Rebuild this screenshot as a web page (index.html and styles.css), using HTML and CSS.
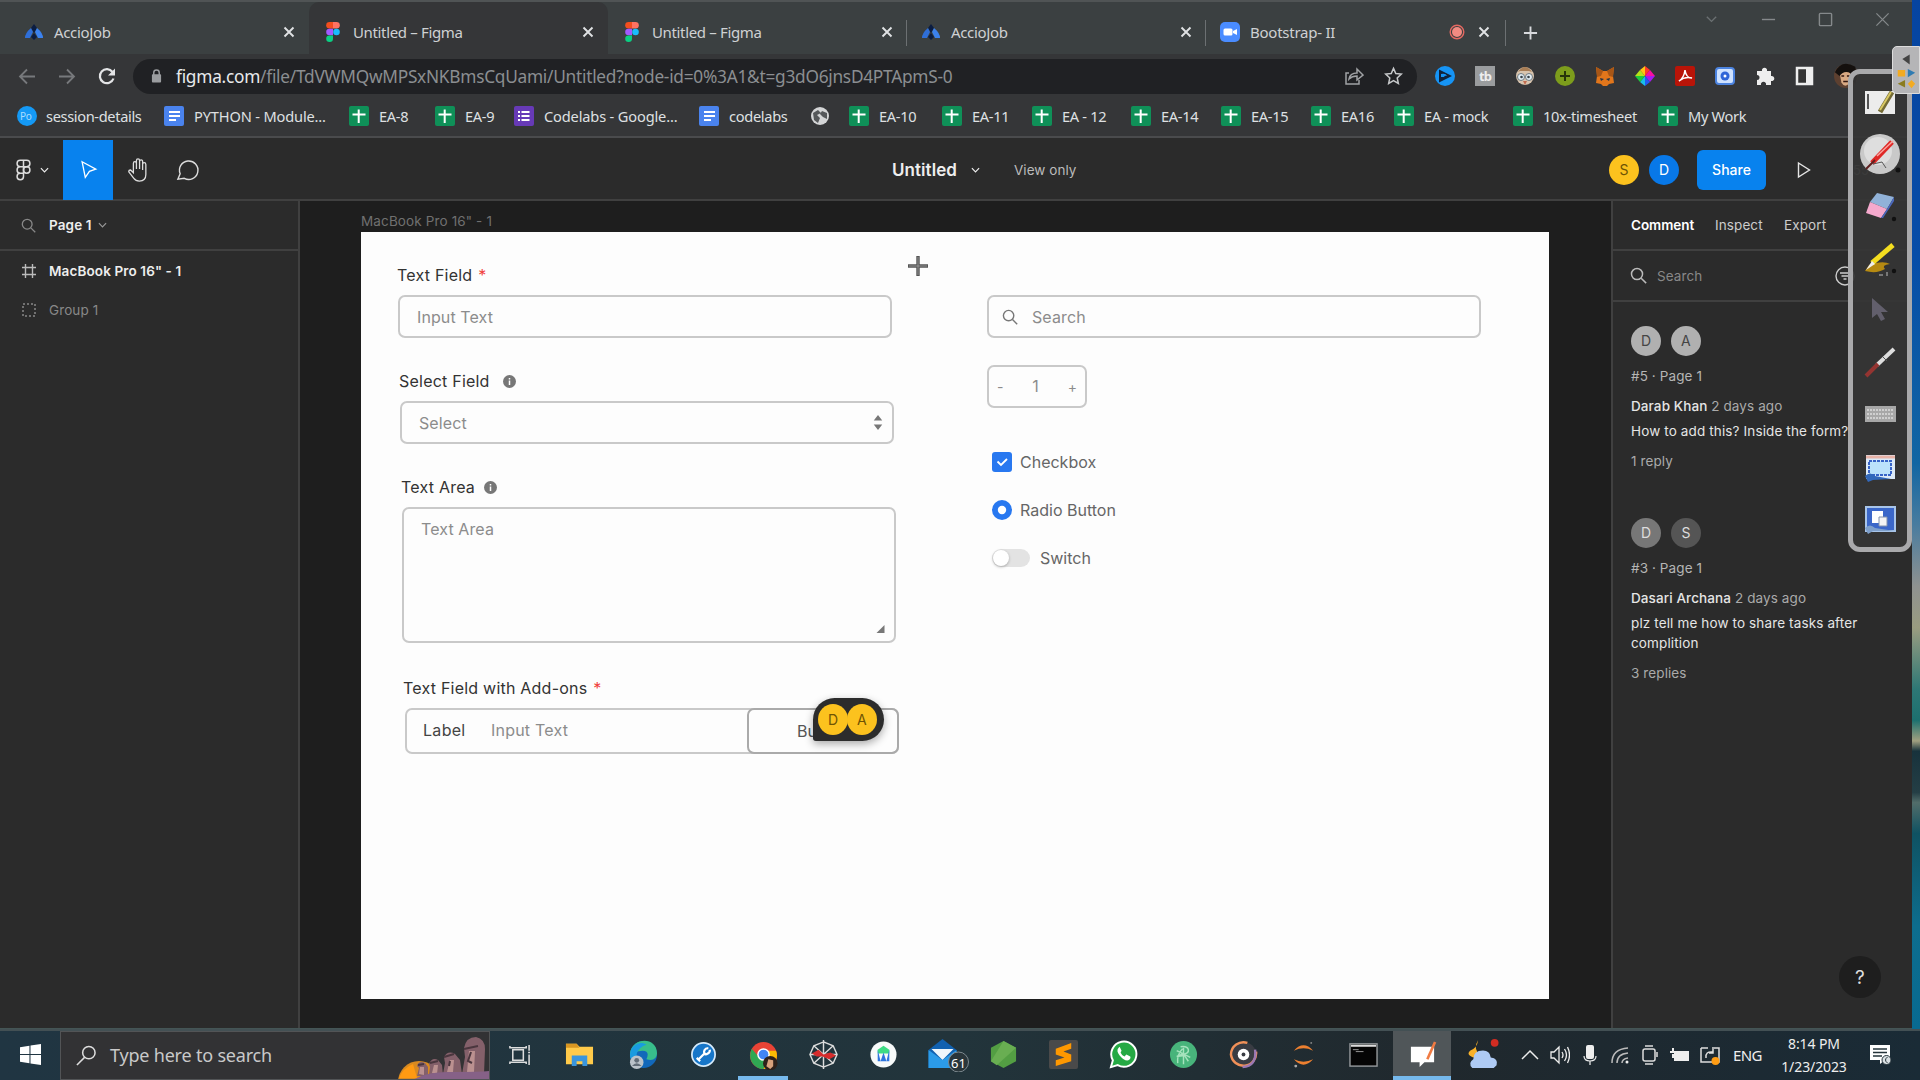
FILE: index.html
```html
<!DOCTYPE html>
<html lang="en">
<head>
<meta charset="utf-8">
<title>Untitled – Figma</title>
<link rel="stylesheet" href="styles.css">
</head>
<body>
<svg class="defs" aria-hidden="true">
  <symbol id="accio" viewBox="0 0 20 20"><path d="M7 6l3-4 3 4-3 5z" fill="#0b1d42"/><path d="M7 6l2 4-3 6H1q0-5 6-10z" fill="#2f6fd8"/><path d="M13 6l-2 4 3 6h5q0-5-6-10z" fill="#3b82ee"/><path d="M10 11l3 4-3 3-3-3z" fill="#0b1d42"/></symbol>
  <symbol id="figma" viewBox="0 0 14 20"><path d="M3.500 0H7v6.600H3.500a3.300 3.300 0 010-6.600z" fill="#f24e1e"/><path d="M7 0h3.500a3.300 3.300 0 010 6.600H7z" fill="#ff7262"/><path d="M3.500 6.700H7v6.600H3.500a3.300 3.300 0 010-6.600z" fill="#a259ff"/><circle cx="10.500" cy="10" r="3.300" fill="#1abcfe"/><path d="M3.500 13.400H7v3.300a3.400 3.300 0 11-3.500-3.300z" fill="#0acf83"/></symbol>
  <symbol id="sheet" viewBox="0 0 20 20"><rect width="20" height="20" rx="2" fill="#0f9058"/><path d="M9.700 3.500v13.500M3.500 8.500h13" stroke="#fff" stroke-width="2"/></symbol>
  <symbol id="doc" viewBox="0 0 20 20"><rect width="20" height="20" rx="2" fill="#4a83ee"/><path d="M5 6h11M5 10h11M5 14h7" stroke="#fff" stroke-width="2"/></symbol>
  <symbol id="x" viewBox="0 0 12 12"><path d="M1.500 1.500l9 9M10.500 1.500l-9 9" stroke="currentColor" stroke-width="1.900"/></symbol>
  <symbol id="chev" viewBox="0 0 10 8"><path d="M1 2l4 4 4-4" fill="none" stroke="currentColor" stroke-width="1.300"/></symbol>
  <symbol id="lens" viewBox="0 0 16 16"><circle cx="6.600" cy="6.600" r="5.200" fill="none" stroke="currentColor" stroke-width="1.400"/><path d="M10.500 10.500l4.700 4.700" stroke="currentColor" stroke-width="1.400"/></symbol>
  <symbol id="info" viewBox="0 0 13 13"><circle cx="6.500" cy="6.500" r="6.500" fill="#777"/><path d="M6.500 5.500v4.500M6.500 3v1.500" stroke="#fff" stroke-width="1.500"/></symbol>
</svg>

<div class="screen">
  <header class="tabs">
    <div class="tab"><svg class="ico"><use href="#accio"/></svg><span>AccioJob</span><svg class="close"><use href="#x"/></svg></div>
    <div class="tab current"><svg class="ico"><use href="#figma"/></svg><span>Untitled – Figma</span><svg class="close"><use href="#x"/></svg></div>
    <div class="tab line"><svg class="ico"><use href="#figma"/></svg><span>Untitled – Figma</span><svg class="close"><use href="#x"/></svg></div>
    <div class="tab line"><svg class="ico"><use href="#accio"/></svg><span>AccioJob</span><svg class="close"><use href="#x"/></svg></div>
    <div class="tab line"><svg class="ico" viewBox="0 0 20 20"><rect width="20" height="20" rx="5" fill="#4a8cff"/><rect x="3.500" y="6.500" width="9" height="7" rx="1.500" fill="#fff"/><path d="M13 9l4-2v6l-4-2z" fill="#fff"/></svg><span>Bootstrap- II</span><svg class="rec" viewBox="0 0 16 16"><circle cx="8" cy="8" r="6.800" fill="none" stroke="#e46962" stroke-width="1.400"/><circle cx="8" cy="8" r="5" fill="#f28b82"/></svg><svg class="close"><use href="#x"/></svg></div>
    <svg class="newtab" viewBox="0 0 16 16"><path d="M8 1v14M1 8h14" stroke="#d8dadd" stroke-width="2"/></svg>
    <div class="winctl">
      <svg viewBox="0 0 16 16"><path d="M3 5l5 5 5-5" fill="none" stroke="#6b7072" stroke-width="1.500"/></svg>
      <svg viewBox="0 0 16 16"><path d="M1 8h14" stroke="#85898b" stroke-width="1.500"/></svg>
      <svg viewBox="0 0 16 16"><rect x="1.500" y="1.500" width="13" height="13" rx="1" fill="none" stroke="#85898b" stroke-width="1.500"/></svg>
      <svg viewBox="0 0 16 16"><path d="M1.500 1.500l13 13M14.500 1.500l-13 13" stroke="#85898b" stroke-width="1.300"/></svg>
    </div>
  </header>

  <div class="address">
    <svg class="nav" viewBox="0 0 18 18"><path d="M17 9H2M9 2L2 9l7 7" fill="none" stroke="#77797c" stroke-width="1.800"/></svg>
    <svg class="nav" viewBox="0 0 18 18"><path d="M1 9h15M9 2l7 7-7 7" fill="none" stroke="#77797c" stroke-width="1.800"/></svg>
    <svg class="nav" viewBox="0 0 18 18"><path d="M14.500 4.500A7 7 0 1015.500 11" fill="none" stroke="#e3e4e6" stroke-width="2.200"/><path d="M17 1v7h-7z" fill="#e3e4e6"/></svg>
    <div class="url">
      <svg class="lock" viewBox="0 0 12 16"><rect x="1" y="6" width="10" height="9" rx="1" fill="#9b9da0"/><path d="M3 7V4.500a3 3 0 016 0V7" fill="none" stroke="#9b9da0" stroke-width="1.600"/></svg>
      <span class="path"><b>figma.com</b>/file/TdVWMQwMPSxNKBmsCqUami/Untitled?node-id=0%3A1&amp;t=g3dO6jnsD4PTApmS-0</span>
      <svg class="share-ico" viewBox="0 0 20 20"><path d="M5 7H2v11h13v-4" fill="none" stroke="#a0a2a5" stroke-width="1.500"/><path d="M5 13q1-6 8-6V3l6 6-6 5v-4q-5 0-8 3z" fill="none" stroke="#a0a2a5" stroke-width="1.500"/></svg>
      <svg class="star" viewBox="0 0 20 20"><path d="M10 2l2.400 5.400 5.800.6-4.300 4 1.200 5.800-5.100-3-5.100 3 1.200-5.800-4.300-4 5.800-.6z" fill="none" stroke="#c5c7c9" stroke-width="1.600"/></svg>
    </div>
    <div class="exts">
      <svg viewBox="0 0 20 20"><circle cx="10" cy="10" r="10" fill="#1694f5"/><path d="M4 3.500l13 6.500-13 6.500z" fill="#10233c"/><path d="M6 11V8q5-1 6 2-2-1-3 1z" fill="#1694f5"/></svg>
      <svg viewBox="0 0 20 20"><rect width="20" height="20" fill="#9a9c9e"/><text x="4" y="15" class="tb">tb</text></svg>
      <svg viewBox="0 0 20 20"><circle cx="10" cy="10" r="9" fill="#d8c4ae"/><path d="M3 6q7-10 14 0l-3-1H5z" fill="#a87d55"/><circle cx="6" cy="11" r="3.500" fill="#e4eef4" stroke="#6f7980"/><circle cx="14" cy="11" r="3.500" fill="#e4eef4" stroke="#6f7980"/><circle cx="6.500" cy="11" r="1.300" fill="#374148"/><circle cx="13.500" cy="11" r="1.300" fill="#374148"/><path d="M8 15h4l-2 4z" fill="#c06b4f"/></svg>
      <svg viewBox="0 0 20 20"><circle cx="10" cy="10" r="10" fill="#7d9d1c"/><path d="M10 5v10M5 10h10" stroke="#27340b" stroke-width="2"/></svg>
      <svg viewBox="0 0 20 20"><path d="M1 1l7 4h4l7-4-1 9 1 7-5 1-2 2H8l-2-2-5-1 1-7z" fill="#e2761b"/><path d="M5 12l4 1-3 2zM15 12l-4 1 3 2z" fill="#233447"/><path d="M1 1l7 4-2 5-4 1zM19 1l-7 4 2 5 4 1z" fill="#a85616"/></svg>
      <svg viewBox="0 0 20 20"><path d="M10 10V0l5 4z" fill="#ff3a28"/><path d="M10 10l5-6 5 6z" fill="#f70ea1"/><path d="M10 10h10l-5 6z" fill="#a31af0"/><path d="M10 10l5 6-5 4z" fill="#2459f2"/><path d="M10 10v10l-5-4z" fill="#18bfe9"/><path d="M10 10l-5 6-5-6z" fill="#1fca3d"/><path d="M10 10H0l5-6z" fill="#b5e01a"/><path d="M10 10L5 4l5-4z" fill="#ffc414"/></svg>
      <svg viewBox="0 0 20 20"><rect width="20" height="20" rx="2" fill="#b91408"/><path d="M4 15q5-3 6-11 1 8 7 8-7-2-13 3z" fill="none" stroke="#fff" stroke-width="1.500"/></svg>
      <svg viewBox="0 0 20 20"><rect x="1" y="2" width="18" height="16" rx="3" fill="#cfe2ff" stroke="#4c83df" stroke-width="2"/><circle cx="10" cy="10" r="4.500" fill="#2f65d8"/><circle cx="10" cy="10" r="1.500" fill="#fff"/></svg>
      <svg viewBox="0 0 20 20"><path d="M2 5h5a2.600 2.600 0 115 0h4v5a2.600 2.600 0 110 5v4h-5a2.600 2.600 0 10-5 0H2v-5a2.500 2.500 0 100-5z" fill="#eee"/></svg>
      <svg viewBox="0 0 20 20"><rect x="2" y="2" width="15" height="16" fill="#333" stroke="#eee" stroke-width="2.500"/><path d="M11 2h6v16h-6z" fill="#eee"/></svg>
      <svg class="face" viewBox="0 0 26 28"><circle cx="13" cy="14" r="13" fill="#5d4030"/><path d="M6 10q8-5 12 2l-1 9q-5 7-9 0z" fill="#d8a983"/><path d="M1 10Q8-5 23 4l2 10-2 10-5-13q-7-4-12 3z" fill="#14100e"/><path d="M8 14h3M14 14h3M10 20h5" stroke="#30160f" stroke-width="1.500"/></svg>
    </div>
  </div>

  <nav class="bookmarks">
    <div class="bm"><svg viewBox="0 0 20 20"><circle cx="10" cy="10" r="10" fill="#1499f5"/><text x="3" y="14" class="po">Po</text></svg><span>session-details</span></div>
    <div class="bm wide"><svg><use href="#doc"/></svg><span>PYTHON - Module...</span></div>
    <div class="bm"><svg><use href="#sheet"/></svg><span>EA-8</span></div>
    <div class="bm"><svg><use href="#sheet"/></svg><span>EA-9</span></div>
    <div class="bm wide"><svg viewBox="0 0 20 20"><rect width="20" height="20" rx="2" fill="#673ab7"/><path d="M7.500 6h8M7.500 10h8M7.500 14h8M4 6h2M4 10h2M4 14h2" stroke="#fff" stroke-width="2"/></svg><span>Codelabs - Google...</span></div>
    <div class="bm"><svg><use href="#doc"/></svg><span>codelabs</span></div>
    <div class="bm"><svg viewBox="0 0 20 20"><circle cx="10" cy="10" r="9" fill="#d4d5d6"/><path d="M3 7l5-3 3 3-4 2 3 3-2 5-4-3zM12 5l5 2v6l-4-2-3-3z" fill="#55585a"/></svg></div>
    <div class="bm"><svg><use href="#sheet"/></svg><span>EA-10</span></div>
    <div class="bm"><svg><use href="#sheet"/></svg><span>EA-11</span></div>
    <div class="bm"><svg><use href="#sheet"/></svg><span>EA - 12</span></div>
    <div class="bm"><svg><use href="#sheet"/></svg><span>EA-14</span></div>
    <div class="bm"><svg><use href="#sheet"/></svg><span>EA-15</span></div>
    <div class="bm"><svg><use href="#sheet"/></svg><span>EA16</span></div>
    <div class="bm"><svg><use href="#sheet"/></svg><span>EA - mock</span></div>
    <div class="bm"><svg><use href="#sheet"/></svg><span>10x-timesheet</span></div>
    <div class="bm"><svg><use href="#sheet"/></svg><span>My Work</span></div>
  </nav>

  <div class="figbar">
    <div class="menu"><svg class="logo" viewBox="0 0 14 20"><path d="M7 1H4a3 3 0 000 6h3zM7 1h3a3 3 0 010 6H7zM7 7H4a3 3 0 000 6h3zM7 13H4a3 3 0 103 3z" fill="none" stroke="#ddd" stroke-width="1.400"/><circle cx="10" cy="10" r="3" fill="none" stroke="#ddd" stroke-width="1.400"/></svg><svg class="chev"><use href="#chev"/></svg></div>
    <div class="tool on"><svg viewBox="0 0 24 24"><path d="M5 3l15 8-7 2.500L8.500 20z" fill="none" stroke="#fff" stroke-width="1.400"/></svg></div>
    <div class="tool"><svg class="big" viewBox="0 0 26 28"><path d="M8 17V7q0-2 1.600-2t1.700 2v6V4q0-2 1.700-2t1.700 2v9V5q0-2 1.700-2T18 5v9V8q0-2 1.700-2T21.500 8v11q0 7-7 7-4 0-6-3l-5.500-7q0-2 2-2z" fill="none" stroke="#ddd" stroke-width="1.400"/></svg></div>
    <div class="tool"><svg class="big" viewBox="0 0 26 28"><path d="M2 24l2.500-6A10 10 0 119 23z" fill="none" stroke="#ddd" stroke-width="1.500"/></svg></div>
    <div class="title"><strong>Untitled</strong><svg class="chev"><use href="#chev"/></svg><span>View only</span></div>
    <div class="people"><i class="av yellow">S</i><i class="av blue">D</i><button class="share">Share</button><svg class="play" viewBox="0 0 14 18"><path d="M1.500 2l11 7-11 7z" fill="none" stroke="#e5e5e5" stroke-width="1.400"/></svg><span class="zoompct">55%</span></div>
  </div>

  <main class="work">
    <aside class="left">
      <div class="page"><svg class="lens"><use href="#lens"/></svg><b>Page 1</b><svg class="chev"><use href="#chev"/></svg></div>
      <div class="layer top"><svg viewBox="0 0 16 16"><path d="M4.500 1v14M11.500 1v14M1 4.500h14M1 11.500h14" stroke="#bbb" stroke-width="1.400"/></svg><b>MacBook Pro 16" - 1</b></div>
      <div class="layer dim"><svg viewBox="0 0 16 16"><rect x="2" y="2" width="12" height="12" fill="none" stroke="#888" stroke-width="1.500" stroke-dasharray="2 2"/></svg><span>Group 1</span></div>
    </aside>

    <section class="canvas">
      <div class="frame-name">MacBook Pro 16" - 1</div>
      <div class="frame">
        <div class="col">
          <div class="field f1"><label>Text Field <em>*</em></label><div class="box">Input Text</div></div>
          <div class="field f2"><label>Select Field<svg class="info"><use href="#info"/></svg></label><div class="box select">Select<svg viewBox="0 0 10 18"><path d="M5 1l4.500 6h-9zM5 17l4.500-6h-9z" fill="#777"/></svg></div></div>
          <div class="field f3"><label>Text Area<svg class="info near"><use href="#info"/></svg></label><div class="box area">Text Area<svg viewBox="0 0 8 8"><path d="M8 0v8H0z" fill="#777"/></svg></div></div>
          <div class="field f4"><label>Text Field with Add-ons <em>*</em></label>
            <div class="box addon"><b>Label</b><span>Input Text</span><div class="btn">Button</div>
              <div class="bubble"><i>D</i><i>A</i></div>
            </div>
          </div>
        </div>
        <div class="col right-col">
          <div class="box search"><svg><use href="#lens"/></svg>Search</div>
          <div class="box stepper"><small>-</small><span>1</span><small>+</small></div>
          <div class="opt"><svg viewBox="0 0 20 20"><rect width="20" height="20" rx="3" fill="#2878f0"/><path d="M5.500 9.500l3.500 3.500 6-6" fill="none" stroke="#fff" stroke-width="1.800"/></svg>Checkbox</div>
          <div class="opt"><svg viewBox="0 0 20 20"><circle cx="10" cy="10" r="10" fill="#2878f0"/><circle cx="10" cy="10" r="4.200" fill="#fff"/></svg>Radio Button</div>
          <div class="opt"><span class="switch"></span>Switch</div>
        </div>
        <svg class="cursor" viewBox="0 0 20 20"><path d="M10 0v20M0 10h20" stroke="#555" stroke-width="3.400"/><path d="M10 1v18M1 10h18" stroke="#aaa" stroke-width=".7"/></svg>
      </div>
    </section>

    <aside class="right">
      <div class="rtabs"><b>Comment</b><span>Inspect</span><span>Export</span></div>
      <div class="rsearch"><svg class="lens"><use href="#lens"/></svg><span>Search</span><svg class="filter" viewBox="0 0 20 20"><circle cx="10" cy="10" r="9" fill="none" stroke="#ccc" stroke-width="1.400"/><path d="M5 7h10M6.500 10h7M8.500 13h3" stroke="#ccc" stroke-width="1.400"/></svg></div>
      <article class="thread">
        <div class="avs"><i>D</i><i>A</i></div>
        <p class="ref">#5 · Page 1</p>
        <p class="who"><b>Darab Khan</b> 2 days ago</p>
        <p class="msg">How to add this? Inside the form?</p>
        <p class="rep">1 reply</p>
      </article>
      <article class="thread second">
        <div class="avs seen"><i>D</i><i>S</i></div>
        <p class="ref">#3 · Page 1</p>
        <p class="who"><b>Dasari Archana</b> 2 days ago</p>
        <p class="msg">plz tell me how to share tasks after complition</p>
        <p class="rep">3 replies</p>
      </article>
      <div class="help">?</div>
    </aside>
  </main>
  <div class="desktop"></div>

  <footer class="taskbar">
    <div class="start"><svg viewBox="0 0 20 20"><path d="M0 3l9-1.300V9.500H0zM10 1.500L20 0v9.500H10zM0 10.500h9v7.800L0 17zM10 10.500h10V20l-10-1.500z" fill="#fff"/></svg></div>
    <div class="find"><svg class="glass" viewBox="0 0 22 22"><circle cx="14" cy="8" r="6.500" fill="none" stroke="#ddd" stroke-width="1.600"/><path d="M9.500 13L1.500 21" stroke="#ddd" stroke-width="1.600"/></svg><span>Type here to search</span>
      <svg class="moai" viewBox="0 0 94 48">
        <circle cx="24" cy="50" r="21" fill="#d98a20"/><path d="M4 46q4-10 14-14l4 14z" fill="#ff9a12"/>
        <path d="M22 44l2-8-2-2q2-6 8-3l3 4v9zM34 43l1-8-1-3q3-7 9-4l4 5 1 10zM48 42l2-11-1-6q4-7 11-3l5 6 2 14zM67 42l3-17-1-9q2-11 12-11 9 2 9 12l-1 25z" fill="#84606a"/>
        <path d="M24 42l1-7h4v8zM37 41l2-8h4l-1 9zM52 40l3-12h4l-1 12zM72 40l2-21h6l-1 21z" fill="#bb9190"/>
        <path d="M23 33l6-1M35 31l8-2M49 25l10-3M69 17l14-3M76 20l-3 9 4 2M55 29l-1 5" stroke="#4a363e" stroke-width="2" fill="none"/>
        <path d="M18 48q14-9 40-8 26 0 36-1v9z" fill="#866187"/></svg></div>
    <div class="apps">
      <div><svg class="small" viewBox="0 0 24 24"><path d="M5 7h11v11H5zM2 3v2h17V3M2 22v-2h17v2M22 2v6M22 12v11M21 10h2" fill="none" stroke="#ddd" stroke-width="1.600"/></svg></div>
      <div><svg viewBox="0 0 30 30"><path d="M1 4h11l3 3h14v18H1z" fill="#ffca4a"/><path d="M1 4h11l3 4H1z" fill="#d99622"/><path d="M7 27V16h16v11h-5v-5h-6v5z" fill="#3a95dc"/></svg></div>
      <div><svg viewBox="0 0 30 30"><circle cx="15" cy="15" r="14" fill="#1268ba"/><path d="M1 14C3-3 29-4 29 14q-1 9-11 6 4-9-4-9-9 0-12 7z" fill="#38bd8b"/><path d="M1 16C1 5 12 0 18 5 8 8 5 17 10 26 4 25 1 20 1 16z" fill="#199be0"/><circle cx="8" cy="23" r="7" fill="#bac2c9"/><circle cx="8" cy="21" r="2.500" fill="#626d78"/><path d="M3 27q5-6 10 0" fill="#626d78"/></svg></div>
      <div><svg viewBox="0 0 30 30"><circle cx="15" cy="15" r="12" fill="#1676c9" stroke="#d5eafa" stroke-width="1.800"/><path d="M10 20l7-7M8 18.500l3.500 3.500M20 8.500q-3 0-4 2t0 3.500 3.500 0 2-4" fill="none" stroke="#fff" stroke-width="2.300"/></svg></div>
      <div class="run"><svg viewBox="0 0 30 30"><circle cx="15" cy="15" r="14" fill="#ea4335"/><path d="M3 8a14 14 0 0012 21l6-11-9 1z" fill="#30a853"/><path d="M28 10a14 14 0 01-13 19l6-11-1-8z" fill="#fbbc04"/><circle cx="15" cy="14" r="6.500" fill="#fff"/><circle cx="15" cy="14" r="5" fill="#4285f4"/><circle cx="22" cy="23" r="7.500" fill="#2e211a"/><path d="M20 19l5 1v6l-3 3-4-3z" fill="#d8a17b"/></svg></div>
      <div><svg viewBox="0 0 30 30"><path d="M15 2l10 4 4 9-4 9-10 4-10-4-4-9 4-9zM15 0v30M1 15h28M5 6l20 18M25 6L5 24" fill="none" stroke="#ddd" stroke-width="1.500"/><path d="M3 14l7-4 5 5 7-2 6 3-7 4-7-3-6 0z" fill="#d62c2c"/></svg></div>
      <div><svg viewBox="0 0 30 30"><circle cx="15" cy="15" r="13.500" fill="#f7fafa"/><path d="M9 10l6-4 6 4v4H9z" fill="#3ddc84"/><path d="M9 10l3 12 3-9 3 9 3-12v12H9z" fill="#2c74df"/></svg></div>
      <div><svg class="mail" viewBox="0 0 42 34"><path d="M1 12L15 1l14 11v18H1z" fill="#1161b0"/><path d="M4 11h22L15 22z" fill="#eef6fb"/><path d="M1 12l14 10 14-10v18H1z" fill="#2b9be8"/><circle cx="31" cy="24" r="10" fill="#29353a" stroke="#7c888e"/><text x="31" y="29.500" class="count">61</text></svg></div>
      <div><svg viewBox="0 0 30 30"><path d="M15 1l13 7v14l-13 7-13-7V8z" fill="#539e43"/><path d="M15 1l13 7-20 18-6-4z" fill="#69ae52"/></svg></div>
      <div><svg viewBox="0 0 30 30"><rect width="30" height="30" rx="2" fill="#4a4a4a"/><path d="M7 9l16-6v6l-8 3 8 3v7L7 27v-6l9-3-9-3z" fill="#ff9800"/></svg></div>
      <div><svg viewBox="0 0 30 30"><path d="M2 28l2-7a13 13 0 115 5z" fill="#25a944" stroke="#fff" stroke-width="2"/><path d="M10 8q-3 3 1 8 5 6 9 5 3-2 2-4l-4-2-2 2q-3-1-4-4l1-2-2-4z" fill="#fff"/></svg></div>
      <div><svg viewBox="0 0 30 30"><circle cx="15" cy="15" r="14" fill="#48b47b"/><path d="M9 24q-1-9 5-15M12 7q7-1 8 3t-7 5l-5 2 8-1 4 6M15 8v17M8 11l14 7" fill="none" stroke="#a6e3bd" stroke-width="1.500"/></svg></div>
      <div><svg viewBox="0 0 30 30"><circle cx="15" cy="15" r="13" fill="#393c43"/><path d="M28 12A13 13 0 112 15 13 13 0 0119 3" fill="none" stroke="#f09058" stroke-width="2.500"/><path d="M27 10q2 17-13 18" fill="none" stroke="#9b78b4" stroke-width="2.500"/><circle cx="15" cy="15" r="6" fill="#fff"/><circle cx="15" cy="15" r="2" fill="#393c43"/></svg></div>
      <div><svg viewBox="0 0 30 30"><path d="M5 11q10-11 20 0-10-5-20 0zM5 20q10 11 20 0-10 5-20 0z" fill="#ed8030"/><circle cx="7" cy="27" r="1.500" fill="#aaa"/><circle cx="23" cy="3" r="1" fill="#888"/></svg></div>
      <div><svg viewBox="0 0 30 30"><rect x="1" y="4" width="28" height="23" fill="#050505" stroke="#929699" stroke-width="1.500"/><path d="M2 6h26" stroke="#ddd" stroke-width="2"/><path d="M4 10h6M7 12h8" stroke="#999"/></svg></div>
      <div class="focus"><svg viewBox="0 0 30 30"><path d="M3 7h24v16H17l-5 5v-5H3z" fill="#fff"/><path d="M28 2l-8 18" stroke="#f07b43" stroke-width="2.700"/></svg></div>
      <div><svg class="weather" viewBox="0 0 32 34"><path d="M11 2Q5 12 14 18L6 20q-8-3-3-7 7-3 8-11z" fill="#f9b129"/><path d="M5 31q-5-5 1-9 0-9 10-9 7 0 8 7 8 1 6 8l-3 3z" fill="#aecaf4"/><circle cx="28" cy="5" r="4" fill="#d22c22"/></svg></div>
    </div>
    <div class="tray">
      <svg viewBox="0 0 20 20"><path d="M2 14l8-8 8 8" fill="none" stroke="#eee" stroke-width="1.500"/></svg>
      <svg viewBox="0 0 20 20"><path d="M1 7h3l5-5v16l-5-5H1zM12 7q2 3 0 6M14.500 4q4 6 0 12M17.500 2q4 8 0 16" fill="none" stroke="#eee" stroke-width="1.300"/></svg>
      <svg viewBox="0 0 20 20"><rect x="6" y="0" width="8" height="14" rx="2" fill="#eee"/><path d="M4 11q0 5 6 5t6-5M10 16v4" fill="none" stroke="#eee" stroke-width="1.200"/></svg>
      <svg viewBox="0 0 20 20"><path d="M2 18Q2 4 18 3M7 18q0-9 11-10M12 18q0-4 6-5" fill="none" stroke="#bbb" stroke-width="1.500"/><circle cx="17" cy="17" r="1.500" fill="#eee"/></svg>
      <svg viewBox="0 0 20 20"><rect x="3" y="4" width="12" height="12" rx="2" fill="none" stroke="#ddd" stroke-width="1.500"/><path d="M5 1h8M5 19h8M17 7v5" stroke="#ddd" stroke-width="1.500"/></svg>
      <svg viewBox="0 0 20 20"><rect x="4" y="6" width="15" height="10" fill="#eee"/><path d="M3 3v4M0 7h7M3 9v4" stroke="#eee" stroke-width="2"/></svg>
      <svg viewBox="0 0 20 20"><path d="M1 3h7M12 3h7v14H1V3M6 13q-1-7 7-6M13 4v4H9" fill="none" stroke="#ddd" stroke-width="1.500"/><circle cx="15.500" cy="16" r="4" fill="#ff9c13"/></svg>
      <span class="lang">ENG</span>
      <div class="clock"><span>8:14 PM</span><span>1/23/2023</span></div>
      <svg class="note" viewBox="0 0 22 22"><path d="M1 1h20v15h-5l-5 4v-4H1z" fill="#fff"/><path d="M4 5h14M4 8.500h14M4 12h9" stroke="#25343b" stroke-width="1.300"/><circle cx="17.500" cy="16" r="4.500" fill="#dce2e5" stroke="#25343b"/><path d="M18.500 13q-4 3 0 6" fill="none" stroke="#25343b"/></svg>
    </div>
  </footer>

  <div class="pens">
    <svg viewBox="0 0 34 34"><path d="M2 4h30v23H2z" fill="#ececec"/><path d="M5 7v15" stroke="#555" stroke-width="2"/><path d="M29 5L17 25" stroke="#746b35" stroke-width="5"/><path d="M28 5L17 23" stroke="#d9c965" stroke-width="2"/></svg>
    <svg class="disc" viewBox="0 0 42 42"><circle cx="21" cy="21" r="20" fill="#c9c9c9"/><circle cx="19" cy="18" r="14" fill="#dedede"/><path d="M33 9L13 30" stroke="#df2826" stroke-width="5"/><path d="M34 8L18 23" stroke="#f9a49e" stroke-width="1.500"/><path d="M16 27L7 36" stroke="#602020" stroke-width="2"/><path d="M14 31l9-2 4 6" fill="none" stroke="#555"/><circle cx="39" cy="37" r="2.500" fill="#111"/></svg>
    <svg viewBox="0 0 34 34"><path d="M14 3l17 4-7 12-17-7z" fill="#91b2d8"/><path d="M7 12l17 7-6 9-15-5z" fill="#f5a9cd"/><path d="M31 7l-7 12-6 9 2 0 11-17z" fill="#4b68bd"/><circle cx="31" cy="29" r="2.200" fill="#111"/></svg>
    <svg viewBox="0 0 34 34"><path d="M6 23q14-5 21-1-9 1-5 5-8 5-20 2" fill="#b68a12"/><path d="M30 3L9 21" stroke="#f4de20" stroke-width="5"/><path d="M9 19l3 3-9 6z" fill="#eee"/><circle cx="31" cy="29" r="2.200" fill="#111"/><path d="M16 33h4M24 30v4" stroke="#777" stroke-width="2"/></svg>
    <svg viewBox="0 0 34 34"><path d="M9 4v20l5-4 4 7 4-2-4-7h7z" fill="#625f6c"/></svg>
    <svg viewBox="0 0 34 34"><path d="M31 4L14 20" stroke="#dedede" stroke-width="4"/><path d="M15 19L3 31" stroke="#943431" stroke-width="4"/><path d="M20 12l4 4" stroke="#555"/></svg>
    <svg viewBox="0 0 34 34"><rect x="2" y="9" width="31" height="16" fill="#a7a7a7"/><path d="M4 13h27M4 17h27M4 21h27" stroke="#ddd" stroke-width="1.600" stroke-dasharray="2 1"/></svg>
    <svg viewBox="0 0 34 34"><rect x="3" y="6" width="29" height="24" fill="#dceaf8"/><path d="M3 8h29" stroke="#e7b2a7" stroke-width="3"/><rect x="6" y="12" width="22" height="14" fill="#bce2fb" stroke="#3864c8" stroke-width="2" stroke-dasharray="3 1"/><path d="M2 27q5-5 10 0l16 3-18 1-5 2z" fill="#3368ba"/></svg>
    <svg viewBox="0 0 34 34"><rect x="3" y="6" width="29" height="24" fill="#3b67c9" stroke="#a8c5ea" stroke-width="2"/><path d="M9 10h11v12H9z" fill="#fff"/><path d="M16 16h8v9h-8z" fill="#f4f4f4" stroke="#8392ad"/><path d="M2 27q5-5 10 0l20 3H10l-5 3z" fill="#7fa0cb"/></svg>
  </div>
  <div class="pen-tab"><svg viewBox="0 0 24 44"><path d="M16 5v11l-8-6z" fill="#444"/><path d="M3 22h8v7H3zM18 33l4 4-4 5-4-5z" fill="#f3ab22"/><path d="M14 21l8 4-8 5z" fill="#2f7bb2"/><path d="M11 33v8l-8-4z" fill="#8a7c1f"/></svg></div>
</div>
</body>
</html>
```
FILE: styles.css
```css
* { box-sizing: border-box; }
body { margin: 0; background: #1e1e1e; font-family: "Noto Sans", sans-serif; overflow: hidden; }
b, i, em, strong { font-style: normal; }
p { margin: 0; }
svg { flex: none; display: block; }
.defs { position: absolute; width: 0; height: 0; }

.screen {
  position: relative; width: 1920px; height: 1080px; display: grid;
  grid-template: 54px 44px 40px 63px 828px 51px / 1912px 8px;
  grid-template-areas: "tabs desk" "addr desk" "book desk" "fig desk" "work desk" "task task";
  overflow: hidden;
}

/* browser tabs */
.tabs { grid-area: tabs; display: flex; background: #3b4041; border-top: 2px solid #505455; padding-left: 10px; color: #cfd1d3; }
.tab { width: 299px; height: 52px; padding: 9px 14px 0 15px; display: flex; align-items: center; font-size: 15px; letter-spacing: -.35px; position: relative; }
.tab.current { background: #353638; border-radius: 10px 10px 0 0; }
.tab .ico { width: 20px; height: 20px; margin-right: 10px; margin-left: -1px; }
.tab span { flex: 1; white-space: nowrap; }
.tab svg, .tab span { margin-top: -1px; }
.close { width: 12px; height: 12px; color: #e0e2e4; }
.tab .rec { width: 16px; height: 18px; margin-right: 13px; }
.tab.line::after { content: ""; position: absolute; right: 0; top: 18px; width: 1px; height: 26px; background: #6c7072; }
.newtab { width: 15px; height: 16px; margin: 23px 0 0 18px; }
.tab:nth-child(5) { letter-spacing: -.25px; padding-right: 15px; }
.tab:nth-child(5)::after { right: -1px; }
.winctl { margin: 10px 0 0 auto; padding-right: 22px; display: flex; gap: 42px; }
.winctl svg { width: 15px; height: 15px; }

/* address row */
.address { grid-area: addr; display: flex; align-items: center; background: #353638; padding-left: 18px; }
.nav { width: 18px; height: 19px; margin-right: 22px; }
.url { width: 1284px; height: 35px; margin-left: -5px; background: #202124; border-radius: 18px; display: flex; align-items: center; padding: 0 14px 0 18px; }
.lock { width: 11px; height: 16px; margin-right: 14px; }
.path { flex: 1; color: #8b8e91; font-size: 17.3px; letter-spacing: -.265px; white-space: nowrap; }
.path b { color: #e8eaed; font-weight: 400; }
.share-ico { width: 20px; height: 20px; margin-right: 20px; }
.star { width: 19px; height: 20px; }
.exts { display: flex; align-items: center; gap: 20px; margin-left: 18px; height: 35px; border-radius: 18px; }
.exts svg { width: 20px; height: 20px; }
.exts .face { width: 24px; height: 28px; margin-left: -1px; }
.tb { font: 700 13px "Noto Sans", sans-serif; fill: #eee; letter-spacing: -1px; }
.po { font: 10px "Noto Sans", sans-serif; fill: #a9dcff; }

.bookmarks {
  grid-area: book; background: #353638; color: #dfe0e2; border-bottom: 2px solid #4a4b4d; padding: 0 0 2px 17px; font-size: 14.6px; letter-spacing: -.3px;
  display: grid; align-items: center; white-space: nowrap;
  grid-template-columns: 147px 185px 86px 79px 185px 111px 39px 93px 90px 99px 90px 90px 83px 119px 145px 150px;
}
.bm { display: flex; align-items: center; gap: 10px; }
.bm:first-child { letter-spacing: -.35px; gap: 9px; }
.bm.wide { letter-spacing: -.15px; }
.bm svg { width: 20px; height: 20px; }

/* editor toolbar */
.figbar { grid-area: fig; background: #2b2b2b; border-bottom: 2px solid #404040; display: flex; align-items: center; padding-top: 2px; font-family: Inter, sans-serif; position: relative; color: #eee; }
.menu { width: 63px; display: flex; align-items: center; gap: 9px; padding-left: 16px; }
.logo { width: 15px; height: 22px; }
.chev { width: 9px; height: 8px; }
.tool { width: 50px; height: 60px; display: grid; place-items: center; }
.tool.on { background: #0882ee; }
.tool svg { width: 23px; height: 22px; }
.tool .big { width: 24px; height: 26px; }
.title { margin-left: 679px; display: flex; align-items: center; }
.title strong { font-size: 17px; font-weight: 600; width: 78px; letter-spacing: .05px; white-space: nowrap; }
.title span { font-size: 13.5px; color: #bbb; margin-left: 34px; letter-spacing: .05px; }
.title .chev { margin-left: 1px; }
.people { margin-left: auto; display: flex; align-items: center; width: 303px; }
.av { width: 30px; height: 30px; border-radius: 50%; display: grid; place-items: center; font-size: 14px; margin-right: 10px; }
.yellow { background: #fcc21e; color: #6e5304; }
.blue { background: #0878e8; color: #fff; }
.share { width: 69px; height: 40px; margin-left: 8px; border: 0; border-radius: 6px; background: #0882ee; color: #fff; font: 500 14px Inter, sans-serif; padding: 0; }
.play { width: 14px; height: 18px; margin-left: 31px; }
.zoompct { font-size: 13px; color: #777; margin-left: 42px; }

.work { grid-area: work; display: grid; grid-template-columns: 300px 1311px 301px; font-family: Inter, sans-serif; border-bottom: 1px solid #455; }
.left { background: #2b2b2b; border-right: 2px solid #404040; color: #eee; font-size: 13.5px; }
.page { height: 50px; border-bottom: 2px solid #404040; display: flex; align-items: center; padding-left: 21px; }
.lens { width: 15px; height: 15px; color: #888; margin-right: 13px; }
.page .chev { margin-left: 6px; color: #999; }
.page b, .layer b { font-weight: 600; letter-spacing: .12px; }
.layer { display: flex; align-items: center; height: 40px; padding-left: 21px; gap: 12px; }
.layer.top { height: 39px; }
.layer svg { width: 16px; height: 16px; }
.layer.dim { color: #888; letter-spacing: .1px; }

.canvas { background: #1e1e1e; padding: 12px 0 0 61px; }
.frame-name { height: 19px; color: #707070; font-size: 13.5px; line-height: 17px; letter-spacing: .13px; }
.frame { width: 1188px; height: 767px; background: #fdfdfd; display: flex; position: relative; font-size: 16px; color: #333; }
.col { width: 626px; padding: 30px 0 0 37px; }
.field label { display: flex; align-items: center; height: 26px; letter-spacing: .22px; margin-left: -1px; }
.field em { color: #f0413c; margin-left: 6px; }
.info { width: 13px; height: 13px; margin-left: 13px; }
.info.near { margin-left: 9px; }
.box { width: 494px; height: 43px; margin-top: 7px; border: 2px solid #c9c9c9; border-radius: 7px; padding: 0 17px; display: flex; align-items: center; color: #8c8c8c; background: #fdfdfd; letter-spacing: .1px; }
.f2 { margin: 30px 0 0 2px; }
.f3 { margin: 30px 0 0 4px; }
.f4 { margin: 32px 0 0 6px; }
.select { justify-content: space-between; padding-right: 9px; }
.select svg { width: 10px; height: 17px; }
.area { height: 136px; align-items: flex-start; padding-top: 10px; justify-content: space-between; padding-right: 9px; }
.area svg { width: 9px; height: 8px; align-self: flex-end; margin-bottom: 8px; }
.addon { height: 46px; position: relative; padding-right: 0; padding-left: 16px; margin-left: 1px; }
.addon b { font-weight: 400; color: #444; width: 68px; padding-bottom: 2px; letter-spacing: .3px; }
.addon span { flex: 1; padding-bottom: 2px; letter-spacing: .2px; }
.btn { width: 152px; height: 46px; margin-right: -2px; border: 2px solid #aaa; border-radius: 7px; color: #555; padding-left: 48px; line-height: 42px; }
.bubble { position: absolute; left: 406px; top: -12px; width: 71px; height: 43px; background: #2c2c2c; border-radius: 22px 22px 22px 3px; display: flex; padding: 6px 5px; box-shadow: 0 3px 8px #0005; }
.bubble i { width: 30px; height: 31px; margin-right: -1px; border-radius: 50%; background: #fcc21e; color: #6e5304; display: grid; place-items: center; font-size: 14px; }
.right-col { padding: 57px 0 0; width: 500px; }
.search svg { width: 16px; height: 16px; margin: 0 14px 0 -5px; color: #777; }
.search { padding-left: 18px; }
.right-col .search { margin-top: 6px; margin-left: 0; }
.stepper { width: 100px; margin-top: 27px; padding: 0 8px; justify-content: space-between; }
.stepper small { font-size: 14px; }
.stepper span { margin-top: -2px; }
.opt { display: flex; align-items: center; height: 48px; padding-left: 5px; color: #666; letter-spacing: 0; }
.opt svg { width: 20px; height: 20px; margin-right: 8px; }
.stepper + .opt { margin-top: 30px; }
.switch { width: 38px; height: 18px; border-radius: 9px; background: #e3e3e3; margin-right: 10px; padding: 1px; }
.switch::before { content: ""; display: block; width: 16px; height: 16px; border-radius: 50%; background: #fff; box-shadow: 0 1px 3px #0004; }
.cursor { position: absolute; left: 547px; top: 24px; width: 20px; height: 20px; }

.right { background: #2b2b2b; border-left: 2px solid #404040; font-size: 13.5px; color: #ccc; position: relative; letter-spacing: .1px; }
.rtabs { height: 50px; border-bottom: 2px solid #404040; padding-left: 18px; display: grid; grid-template-columns: 84px 69px 80px; align-items: center; }
.rtabs b { color: #fff; font-weight: 600; letter-spacing: -.05px; }
.rsearch { height: 51px; border-bottom: 2px solid #404040; padding-left: 17px; display: flex; align-items: center; color: #888; }
.rsearch .lens { width: 17px; height: 17px; margin-right: 10px; color: #bbb; }
.filter { width: 20px; height: 20px; margin-left: 133px; }
.thread { height: 192px; padding: 24px 46px 0 18px; line-height: 20px; }
.avs { display: flex; gap: 10px; margin-bottom: 10px; }
.avs i { width: 30px; height: 30px; border-radius: 50%; background: #b0b0b0; color: #444; display: grid; place-items: center; font-size: 14px; }
.seen i { background: #777; color: #ddd; }
.seen i + i { background: #555; }
.ref { color: #b5b5b5; height: 30px; }
.who { color: #aaa; height: 25px; }
.who b { color: #e5e5e5; font-weight: 500; }
.msg { color: #e5e5e5; margin-bottom: 10px; letter-spacing: .13px; }
.second { padding-right: 40px; }
.rep { color: #aaa; }
.help { position: absolute; left: 226px; bottom: 30px; width: 42px; height: 42px; border-radius: 50%; background: #1e1e1e; color: #ddd; display: grid; place-items: center; font-size: 19px; }

.desktop { grid-area: desk; background: linear-gradient(#0644a0 0, #064da8 25%, #1166a3 45%, #497c9f 51%, #8f9290 57%, #9a9c80 61%, #2d7775 67%, #1c706f 70%, #a1a080 72%, #17323c 73%, #243e45 77%, #526d6a 78%, #0f5262 81%, #0d6d8e 90%, #086a91); }

/* taskbar */
.taskbar { grid-area: task; display: flex; background: linear-gradient(90deg, #203542, #22343b 50%, #20282d 75%, #1a2b36); border-top: 2px solid #435054; color: #eee; }
.start { width: 60px; display: grid; place-items: center; padding-bottom: 2px; }
.start svg { width: 21px; height: 21px; }
.find { width: 430px; background: #323234; border: 1px solid #525456; display: flex; align-items: center; padding-left: 14px; overflow: hidden; }
.glass { width: 22px; height: 21px; }
.find span { flex: 1; font-size: 18px; margin: -2px 0 0 13px; color: #c9c9c9; letter-spacing: -.2px; white-space: nowrap; }
.moai { width: 94px; height: 48px; }
.apps { display: grid; grid-template-columns: 59px 64px repeat(15, 60px); }
.apps div { display: grid; place-items: center; padding-bottom: 2px; }
.apps svg { width: 29px; height: 29px; }
.apps .small { width: 23px; height: 23px; }
.apps .mail { width: 43px; height: 34px; margin-left: 10px; }
.apps .weather { width: 32px; height: 33px; }
.apps .run { border-bottom: 4px solid #76b9ed; margin: 0 5px; padding: 3px 0 0; }
.apps .focus { background: #505659; border-bottom: 4px solid #76b9ed; padding: 2px 0 0; margin-right: 2px; }
.apps div:nth-child(2) { padding-right: 4px; }
.count { font: 13px "Noto Sans", sans-serif; fill: #fff; text-anchor: middle; }
.tray { display: flex; align-items: center; gap: 10px; margin-left: 7px; padding-bottom: 2px; }
.tray svg { width: 20px; height: 20px; }
.lang { font-size: 15px; letter-spacing: -.6px; width: 30px; margin-left: 3px; }
.clock { width: 92px; font-size: 14px; letter-spacing: -.1px; display: flex; flex-direction: column; align-items: center; line-height: 23px; margin-left: -5px; }
.tray .note { width: 22px; height: 22px; margin-left: -1px; }

/* floating annotation tools */
.pens { position: absolute; left: 1848px; top: 69px; width: 64px; height: 483px; border: 5px solid #a9a9ab; border-radius: 12px; background: #353535e6; display: flex; flex-direction: column; align-items: center; padding-top: 13px; gap: 17.700px; }
.pens svg { width: 34px; height: 34px; }
.pens .disc { width: 42px; height: 42px; margin: -6px 0 -2px; }
.pen-tab { position: absolute; left: 1892px; top: 46px; width: 28px; height: 48px; background: #b5b5b7; border: 1px solid #ddd; border-radius: 5px 0 0 5px; padding: 2px; }
.pen-tab svg { width: 22px; height: 42px; }
```
